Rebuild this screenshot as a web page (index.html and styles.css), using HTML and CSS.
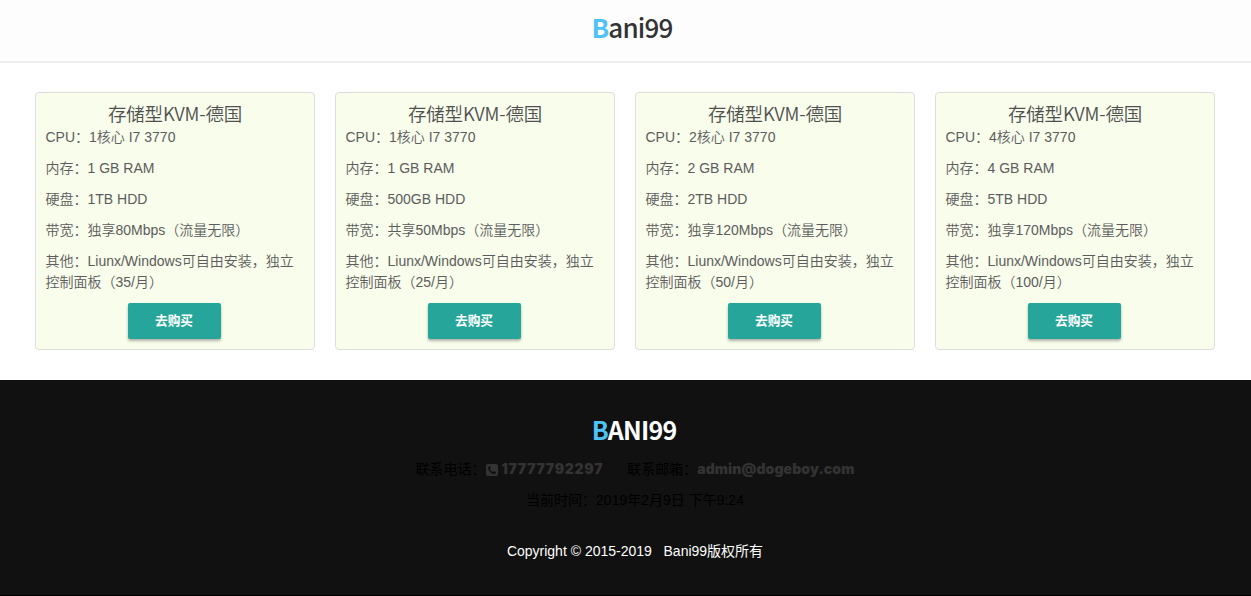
FILE: index.html
```html
<!DOCTYPE html>
<html lang="zh-CN">
<head>
    <meta charset="UTF-8">
    <meta name="viewport" content="width=device-width, initial-scale=1.0">
    <title>Bani99</title>
    <link rel="stylesheet" href="styles.css">
</head>
<body>
    <header class="header">
        <a class="logo"><span>B</span>ani99</a>
    </header>
    <main class="products">
        <div class="card">
            <h3>存储型KVM-德国</h3>
            <p>CPU：1核心 I7 3770</p>
            <p>内存：1 GB RAM</p>
            <p>硬盘：1TB HDD</p>
            <p>带宽：独享80Mbps（流量无限）</p>
            <p>其他：Liunx/Windows可自由安装，独立控制面板（35/月）</p>
            <button class="buy">去购买</button>
        </div>
        <div class="card">
            <h3>存储型KVM-德国</h3>
            <p>CPU：1核心 I7 3770</p>
            <p>内存：1 GB RAM</p>
            <p>硬盘：500GB HDD</p>
            <p>带宽：共享50Mbps（流量无限）</p>
            <p>其他：Liunx/Windows可自由安装，独立控制面板（25/月）</p>
            <button class="buy">去购买</button>
        </div>
        <div class="card">
            <h3>存储型KVM-德国</h3>
            <p>CPU：2核心 I7 3770</p>
            <p>内存：2 GB RAM</p>
            <p>硬盘：2TB HDD</p>
            <p>带宽：独享120Mbps（流量无限）</p>
            <p>其他：Liunx/Windows可自由安装，独立控制面板（50/月）</p>
            <button class="buy">去购买</button>
        </div>
        <div class="card">
            <h3>存储型KVM-德国</h3>
            <p>CPU：4核心 I7 3770</p>
            <p>内存：4 GB RAM</p>
            <p>硬盘：5TB HDD</p>
            <p>带宽：独享170Mbps（流量无限）</p>
            <p>其他：Liunx/Windows可自由安装，独立控制面板（100/月）</p>
            <button class="buy">去购买</button>
        </div>
    </main>
    <footer class="footer">
        <div class="logo footer-logo"><span>B</span>ANI99</div>
        <div class="contact">
            <div>联系电话：<svg class="phone" viewBox="0 0 12 12"><path fill-rule="evenodd" d="M2.200 0h7.600A2.200 2.200 0 0 1 12 2.200v7.600A2.200 2.200 0 0 1 9.800 12H2.200A2.200 2.200 0 0 1 0 9.800V2.200A2.200 2.200 0 0 1 2.200 0zM3.900 2C3 2.200 2.100 2.900 2.100 3.900c0 2.700 3.300 6.100 6 6.100 1 0 1.800-.8 1.900-1.800L8 7.100l-1 1C5.700 7.600 4.400 6.300 3.900 5l1-1z"/></svg><b class="tel">17777792297</b></div>
            <div>联系邮箱：<b class="mail">admin@dogeboy.com</b></div>
        </div>
        <p class="time">当前时间：2019年2月9日 下午9:24</p>
        <p class="copyright">Copyright © 2015-2019 &nbsp; Bani99版权所有</p>
    </footer>
</body>
</html>
```

FILE: styles.css
```css
* {
    box-sizing: border-box;
}
body {
    margin: 0;
    font-family: "Liberation Sans", "Noto Sans CJK SC", sans-serif;
    font-size: 14px;
    line-height: 21px;
    background-color: #fff;
}
p, h3 {
    margin: 0;
}
.header {
    height: 63px;
    padding: 7px 0 0 13px;
    text-align: center;
    background-color: #fdfdfd;
    border-bottom: 2px solid #eee;
}
.logo {
    font-family: "Noto Sans CJK SC", sans-serif;
    font-size: 26px;
    font-weight: 500;
    line-height: 40px;
    letter-spacing: -0.8px;
    color: #333;
}
.logo span {
    color: #4fc3f7;
}
.header .logo span {
    font-weight: 700;
}
.products {
    display: grid;
    grid-template-columns: repeat(4, 280px);
    gap: 20px;
    padding: 29px 0 30px 35px;
}
.card {
    height: 258px;
    padding: 9px 9.5px;
    border: 1px solid #ddd;
    border-radius: 4px;
    background-color: #f9fdec;
    color: #5c5c5c;
    text-align: center;
    font-weight: 350;
}
.card h3 {
    font-family: "Noto Sans CJK SC", sans-serif;
    font-size: 18.5px;
    font-weight: 350;
    line-height: 23px;
    letter-spacing: -0.2px;
    margin-bottom: 2px;
    color: #505050;
}
.card p {
    margin-bottom: 10px;
    text-align: left;
}
.buy {
    display: block;
    width: 93px;
    height: 36px;
    margin: 0 82px;
    border: none;
    border-radius: 2px;
    background-color: #26a69a;
    box-shadow: 0 2px 3px rgba(0, 0, 0, 0.3);
    color: #fff;
    font-family: "Noto Sans CJK SC", sans-serif;
    font-size: 12.7px;
    font-weight: 700;
    line-height: 34px;
    padding: 0 0 2px;
    cursor: pointer;
}
.footer {
    height: 216px;
    padding: 29px 0 0 19px;
    background-color: #111;
    border-bottom: 1px solid #000;
    color: #000;
    text-align: center;
}
.footer-logo {
    margin-left: -2px;
    color: #fff;
    font-size: 25px;
    font-weight: 700;
}
.contact {
    display: flex;
    justify-content: center;
    gap: 24px;
    margin: 9px 0 10px;
}
.contact b {
    color: #333;
    font-family: Inter, sans-serif;
    font-weight: 900;
}
.contact .tel {
    letter-spacing: 0.7px;
}
.contact .mail {
    letter-spacing: 0.1px;
}
.phone {
    width: 12px;
    height: 12px;
    margin-right: 4px;
    vertical-align: -2px;
    fill: #333;
}
.copyright {
    margin-top: 30px;
    color: #fff;
}
```
